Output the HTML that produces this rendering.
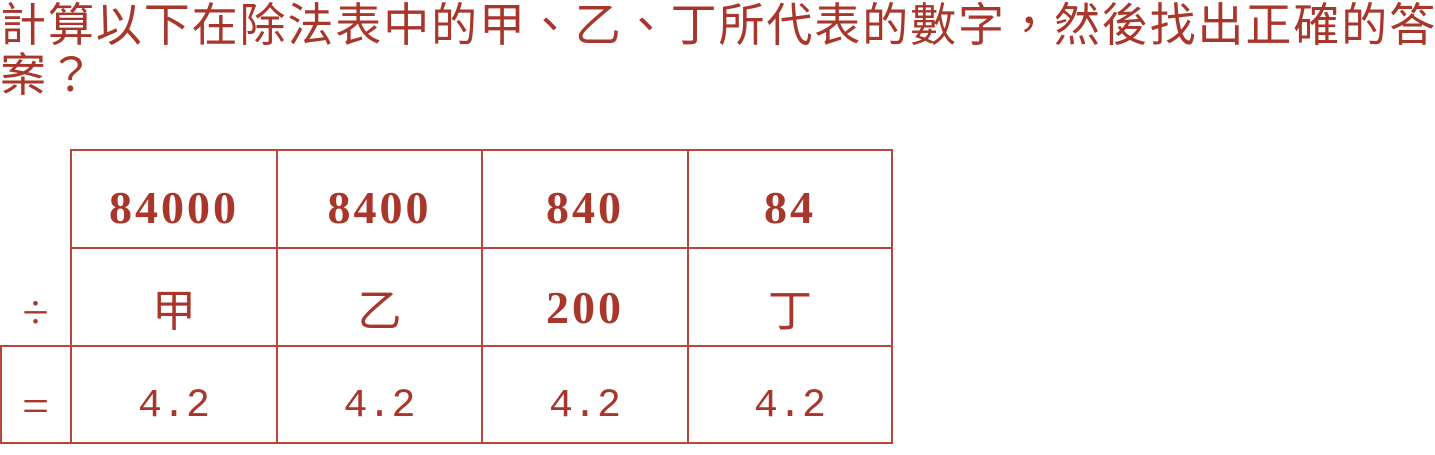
<!DOCTYPE html>
<html><head><meta charset="utf-8"><style>
body{margin:0;width:1435px;height:446px;background:#fff;overflow:hidden;position:relative;color:#a8362a;}
.t{position:absolute;left:0;top:0px;width:1460px;font:46px/50px "Liberation Sans","Noto Sans CJK TC",sans-serif;letter-spacing:1.9px;white-space:nowrap}
.c{position:absolute;display:flex;align-items:center;justify-content:center;box-sizing:border-box}
.l{position:absolute;background:#b5473c}
.s{font:bold 46px "Liberation Serif",serif;letter-spacing:3px}
.m{font:40px "Liberation Mono",monospace}
.k{font:44px "Noto Sans CJK TC",sans-serif}
.o{font:48px "Liberation Serif",serif}
</style></head><body>
<div class="t">計算以下在除法表中的甲、乙、丁所代表的數字，然後找出正確的答<br>案？</div>
<div class="l" style="left:70px;top:149px;width:823px;height:2px"></div>
<div class="l" style="left:70px;top:247px;width:823px;height:2px"></div>
<div class="l" style="left:0;top:345px;width:893px;height:2px"></div>
<div class="l" style="left:0;top:442px;width:893px;height:2px"></div>
<div class="l" style="left:0;top:345px;width:2px;height:99px"></div>
<div class="l" style="left:70px;top:149px;width:2px;height:295px"></div>
<div class="l" style="left:276px;top:149px;width:2px;height:295px"></div>
<div class="l" style="left:481px;top:149px;width:2px;height:295px"></div>
<div class="l" style="left:687px;top:149px;width:2px;height:295px"></div>
<div class="l" style="left:891px;top:149px;width:2px;height:295px"></div>
<div class="c s" style="left:71px;top:160px;width:206px;height:95px">84000</div>
<div class="c s" style="left:277px;top:160px;width:205px;height:95px">8400</div>
<div class="c s" style="left:482px;top:160px;width:206px;height:95px">840</div>
<div class="c s" style="left:688px;top:160px;width:204px;height:95px">84</div>
<div class="c o" style="left:0;top:263px;width:71px;height:98px">÷</div>
<div class="c k" style="left:71px;top:258px;width:206px;height:98px">甲</div>
<div class="c k" style="left:277px;top:258px;width:205px;height:98px">乙</div>
<div class="c s" style="left:482px;top:258px;width:206px;height:98px">200</div>
<div class="c k" style="left:688px;top:258px;width:204px;height:98px">丁</div>
<div class="c o" style="left:0;top:358px;width:71px;height:97px">=</div>
<div class="c m" style="left:71px;top:358px;width:206px;height:97px">4.2</div>
<div class="c m" style="left:277px;top:358px;width:205px;height:97px">4.2</div>
<div class="c m" style="left:482px;top:358px;width:206px;height:97px">4.2</div>
<div class="c m" style="left:688px;top:358px;width:204px;height:97px">4.2</div>
</body></html>
